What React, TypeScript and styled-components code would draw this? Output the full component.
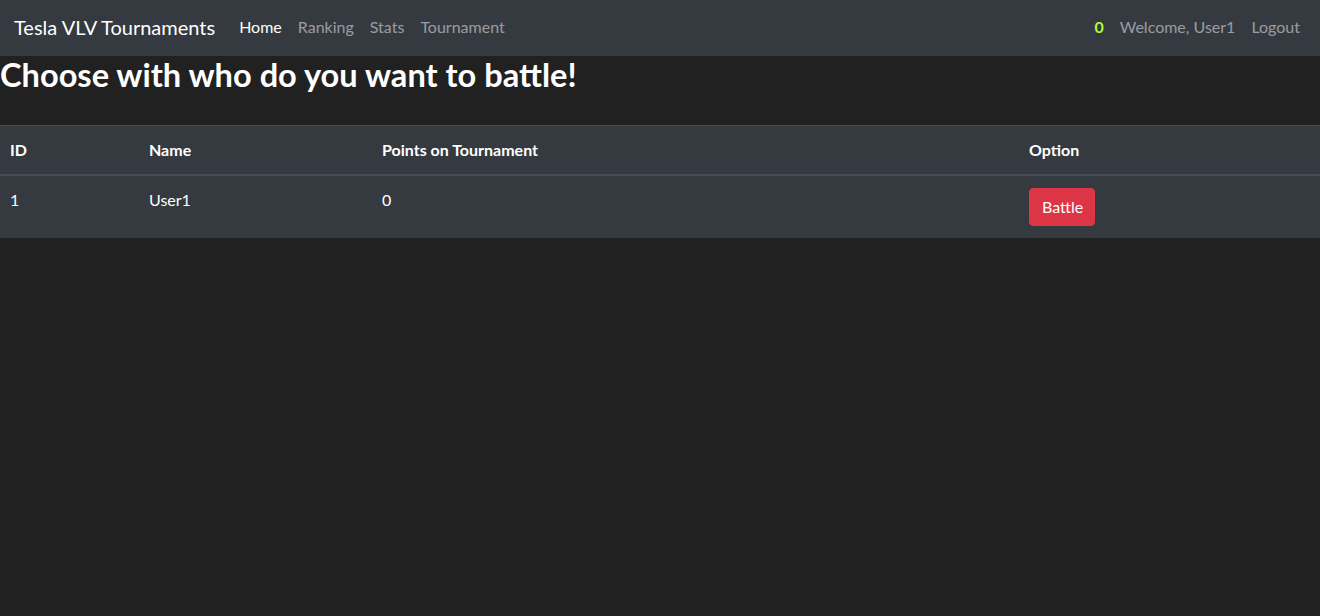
import React from "react";
import styled, { createGlobalStyle } from "styled-components";

const Global = createGlobalStyle`
  html, body { margin: 0; padding: 0; }
  body {
    background: #212121;
    color: #fff;
    font-family: Lato, "Noto Sans", sans-serif;
    font-size: 16px;
    line-height: 1.5;
  }
  * { box-sizing: border-box; }
`;

const Navbar = styled.nav`
  display: flex;
  align-items: center;
  justify-content: space-between;
  height: 56px;
  padding: 0 12px 2px 14px;
  background: #343a40;
`;

const Group = styled.div`
  display: flex;
  align-items: center;
`;

const Brand = styled.a`
  font-size: 20px;
  color: #fff;
  margin-right: 16px;
  white-space: nowrap;
`;

const NavLink = styled.a<{ $active?: boolean }>`
  padding: 8px;
  color: ${(p) => (p.$active ? "#fff" : "rgba(255,255,255,0.5)")};
  white-space: nowrap;
`;

const Points = styled.span`
  color: #adff2f;
  font-weight: 700;
  padding: 8px;
`;

const Title = styled.h2`
  margin: 0 0 31px;
  font-size: 32.6px;
  font-weight: 700;
  line-height: 1.17;
`;

const Table = styled.table`
  width: 100%;
  border-collapse: collapse;
  background: #343a40;
  color: #fff;
`;

const Th = styled.th<{ $w?: string }>`
  text-align: left;
  padding: 12px 14px 12px 10px;
  font-weight: 700;
  border-top: 1px solid #454d55;
  border-bottom: 2px solid #454d55;
  width: ${(p) => p.$w || "auto"};
`;

const Td = styled.td`
  padding: 12px 14px 12px 10px;
  vertical-align: top;
`;

const BattleButton = styled.button`
  font-family: inherit;
  font-size: 16px;
  line-height: 1.5;
  color: #fff;
  background: #dc3545;
  border: 1px solid #dc3545;
  border-radius: 4px;
  padding: 6px 11px 6px 12px;
  cursor: pointer;
`;

export default function App() {
  return (
    <>
      <Global />
      <Navbar>
        <Group>
          <Brand>Tesla VLV Tournaments</Brand>
          <NavLink $active>Home</NavLink>
          <NavLink>Ranking</NavLink>
          <NavLink>Stats</NavLink>
          <NavLink>Tournament</NavLink>
        </Group>
        <Group>
          <Points>0</Points>
          <NavLink>Welcome, User1</NavLink>
          <NavLink>Logout</NavLink>
        </Group>
      </Navbar>
      <Title>Choose with who do you want to battle!</Title>
      <Table>
        <thead>
          <tr>
            <Th $w="139px">ID</Th>
            <Th $w="233px">Name</Th>
            <Th $w="647px">Points on Tournament</Th>
            <Th>Option</Th>
          </tr>
        </thead>
        <tbody>
          <tr>
            <Td>1</Td>
            <Td>User1</Td>
            <Td>0</Td>
            <Td>
              <BattleButton>Battle</BattleButton>
            </Td>
          </tr>
        </tbody>
      </Table>
    </>
  );
}
